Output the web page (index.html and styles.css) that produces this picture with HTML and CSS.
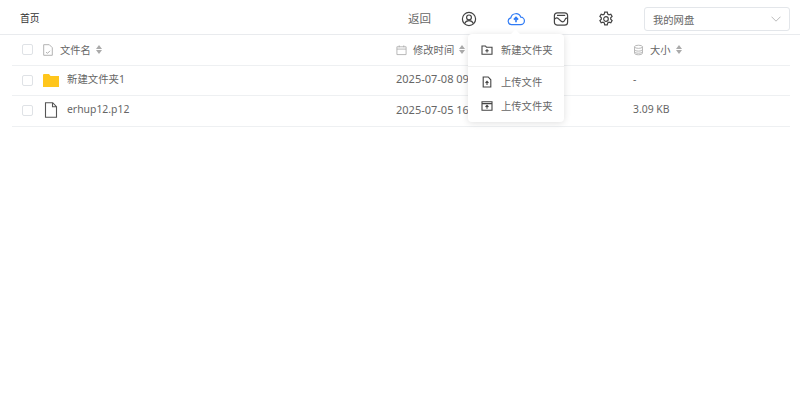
FILE: index.html
```html
<!DOCTYPE html>
<html lang="zh">
<head>
<meta charset="utf-8">
<title>首页</title>
<link rel="stylesheet" href="styles.css">
</head>
<body>
<header class="topbar">
  <div class="crumb">首页</div>
  <div class="tools">
    <span class="back">返回</span>
    <svg class="tool" viewBox="0 0 16 16"><circle cx="8" cy="8" r="6.600"/><circle cx="8" cy="6.400" r="2.400"/><path d="M3.600 12.600c.8-2 2.400-3 4.400-3s3.600 1 4.400 3"/></svg>
    <div class="upload">
      <svg class="tool blue" viewBox="0 0 18 16"><path d="M5 13.600H4.400A3.400 3.400 0 0 1 3.800 6.900 5.200 5.200 0 0 1 13.800 6.200 3.700 3.700 0 0 1 13.600 13.600Z"/><path class="bold" d="M9 11.200V6.600M6.900 8.600 9 6.400l2.100 2.200"/></svg>
      <div class="menu">
        <div class="arrow"></div>
        <div class="menu-item">
          <svg class="micon" viewBox="0 0 12 12"><path d="M1 10.200V2h3.400l1 1.200H11v7Z"/><path d="M6 5v3.400M4.300 6.700h3.400"/></svg>
          <span>新建文件夹</span>
        </div>
        <div class="menu-sep"></div>
        <div class="menu-item">
          <svg class="micon" viewBox="0 0 12 12"><path d="M2.200 11V1h5l2.600 2.800V11Z"/><path d="M6 9V5.400M4.500 6.800 6 5.300l1.500 1.500"/></svg>
          <span>上传文件</span>
        </div>
        <div class="menu-item">
          <svg class="micon" viewBox="0 0 12 12"><path d="M1 10.200V1.800h10v8.400ZM1 3.600h10"/><path d="M6 8.800V5.400M4.500 6.800 6 5.300l1.500 1.500"/></svg>
          <span>上传文件夹</span>
        </div>
      </div>
    </div>
    <svg class="tool wallet" viewBox="0 0 16 16"><rect x="1.400" y="1.800" width="13.200" height="12.400" rx="3"/><path d="M1.600 8.200c1.400-1.800 2.800-1.800 4 -.4s2.400 3 4 3 2.200-1.600 3-3.300l2-.6"/><path d="M4 4.400h8.200"/></svg>
    <svg class="tool" viewBox="0 0 16 16"><circle cx="8" cy="8" r="2.300"/><path d="M6.700 1.200h2.600l.4 1.900 1.300.7 1.800-.6 1.300 2.300-1.400 1.300v1.400l1.400 1.300-1.300 2.300-1.800-.6-1.300.7-.4 1.900H6.700l-.4-1.900-1.300-.7-1.800.6-1.300-2.300 1.400-1.300V6.800L1.900 5.500l1.300-2.300 1.800.6 1.300-.7Z"/></svg>
    <div class="select">
      <span>我的网盘</span>
      <svg class="chev" viewBox="0 0 10 6"><path d="M.5.700 5 5.200 9.500.700"/></svg>
    </div>
  </div>
</header>
<main class="table">
  <div class="row head">
    <span class="check"></span>
    <div class="cell">
      <svg class="hicon" viewBox="0 0 10 12"><path d="M.7 11.300V.7h5.600l3 3v7.600Z"/><path d="M3 8.200 4.600 9.300 7 6.800"/></svg>
      <span>文件名</span><i class="sort"></i>
    </div>
    <div class="cell">
      <svg class="hicon wide" viewBox="0 0 12 12"><path d="M1 2.500h10v8.500H1ZM1 5h10M3.500 1v2M8.500 1v2"/></svg>
      <span>修改时间</span><i class="sort"></i>
    </div>
    <div class="cell">
      <svg class="hicon wide" viewBox="0 0 12 12"><ellipse cx="6" cy="2.500" rx="4.300" ry="1.700"/><path d="M1.700 2.500v7c0 1 1.900 1.700 4.300 1.700s4.300-.7 4.300-1.700v-7M1.700 5.500c0 1 1.900 1.700 4.300 1.700s4.300-.7 4.300-1.700M1.700 7.800c0 1 1.900 1.700 4.300 1.700s4.300-.7 4.300-1.700"/></svg>
      <span>大小</span><i class="sort"></i>
    </div>
  </div>
  <div class="row body-row">
    <span class="check"></span>
    <div class="cell file">
      <svg class="ficon" viewBox="0 0 16 13"><path class="fold" d="M0 1a1 1 0 0 1 1-1h5l1.500 2H16v11H0Z"/></svg>
      <span>新建文件夹1</span>
    </div>
    <div class="cell text date">2025-07-08 09:12</div>
    <div class="cell text">-</div>
  </div>
  <div class="row body-row">
    <span class="check"></span>
    <div class="cell file">
      <svg class="ficon tall" viewBox="0 0 13 16"><path class="doc" d="M1 15.300V.7h7.200L12 4.600v10.700ZM8 .7v4h4"/></svg>
      <span>erhup12.p12</span>
    </div>
    <div class="cell text date">2025-07-05 16:30</div>
    <div class="cell text">3.09 KB</div>
  </div>
</main>
</body>
</html>
```
FILE: styles.css
```css
* { box-sizing: border-box; }
html, body { margin: 0; height: 100%; background: #fff; overflow: hidden; }
body { font-family: "Noto Sans", "Noto Sans CJK SC", sans-serif; font-size: 11px; color: #555; }

.topbar {
  height: 35px;
  border-bottom: 1px solid #e9ebee;
  display: flex;
  align-items: center;
  justify-content: space-between;
  padding: 0 10px 0 20px;
}
.crumb { color: #333; font-size: 9.800px; padding-top: 2px; }
.tools { display: flex; align-items: center; padding-top: 4px; }
.back { font-size: 11.500px; color: #666; width: 24px; white-space: nowrap; margin: 0 29px 2px 0; }
.tool { width: 16px; height: 16px; fill: none; stroke: #444; stroke-width: 1.200; margin-right: 30px; display: block; }
.tool.wallet { margin-right: 29px; }
.tool.blue { stroke: #2f7bf5; width: 18px; margin: 0; }
.bold { stroke-width: 1.600; }
.upload { position: relative; width: 18px; margin-right: 28px; }
.menu {
  position: absolute;
  top: 23px;
  left: -39px;
  width: 96px;
  height: 88px;
  background: #fff;
  border-radius: 4px;
  box-shadow: 0 1px 7px rgba(0,0,0,.13);
  padding: 3px 0;
  z-index: 5;
}
.arrow {
  position: absolute;
  top: -3px;
  left: 44px;
  width: 7px;
  height: 7px;
  background: #fff;
  transform: rotate(45deg);
}
.menu-item { position: relative; height: 24px; display: flex; align-items: center; gap: 8px; padding-left: 13px; font-size: 10.300px; color: #666; white-space: nowrap; }
.menu-sep { height: 1px; background: #f0f0f0; margin: 5px 0 2px; }
.micon { width: 12px; height: 12px; fill: none; stroke: #444; stroke-width: 1.100; flex: none; margin-top: 1px; }
.select {
  width: 146px;
  height: 24px;
  border: 1px solid #e3e6ea;
  border-radius: 3px;
  display: flex;
  align-items: center;
  justify-content: space-between;
  padding: 0 8px;
  font-size: 10.300px;
  color: #666;
}
.chev { width: 10px; height: 6px; fill: none; stroke: #bbb; stroke-width: 1; }

.table { margin: 0 10px 0 12px; }
.row {
  height: 30.500px;
  display: grid;
  grid-template-columns: 31px 353px 237px 1fr;
  align-items: center;
  border-bottom: 1px solid #eef0f2;
  color: #666;
}
.check { width: 11px; height: 11px; margin-left: 10px; border: 1px solid #dfe2e6; border-radius: 2px; display: block; }
.cell { display: flex; align-items: center; white-space: nowrap; }
.head .cell { font-size: 10.300px; color: #666; }
.body-row { font-size: 10.400px; }
.date { font-size: 11px; }
.text { padding-bottom: 3px; }
.hicon { width: 10px; height: 12px; fill: none; stroke: #aaa; stroke-width: .9; margin: 0 7px 0 0; flex: none; }
.hicon.wide { width: 11px; margin-right: 6px; }
.sort { display: inline-block; width: 7px; height: 9px; margin-left: 5px; position: relative; }
.sort::before, .sort::after { content: ""; position: absolute; left: 0; border-left: 3.500px solid transparent; border-right: 3.500px solid transparent; }
.sort::before { top: 0; border-bottom: 4px solid #aaa; }
.sort::after { bottom: 0; border-top: 4px solid #aaa; }
.file span { margin-left: 8px; margin-bottom: 3px; }
.ficon { width: 16px; height: 13px; flex: none; }
.ficon.tall { height: 16px; margin-bottom: 1px; }
.fold { fill: #ffc61c; }
.doc { fill: none; stroke: #555; stroke-width: 1.100; }
```
